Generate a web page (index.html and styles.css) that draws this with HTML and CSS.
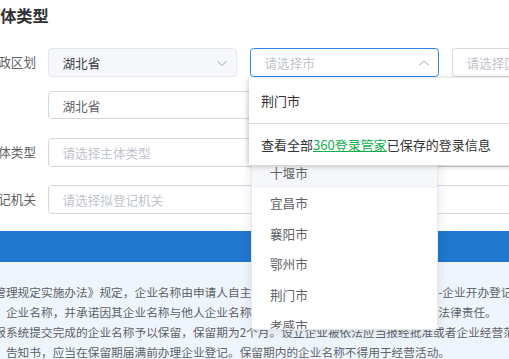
FILE: index.html
```html
<!DOCTYPE html>
<html lang="zh-CN">
<head>
    <meta charset="UTF-8">
    <meta name="viewport" content="width=device-width, initial-scale=1.0">
    <title>主体类型</title>
    <link rel="stylesheet" href="styles.css">
</head>
<body>
    <div class="page">
        <h3 class="section-title">主体类型</h3>
        <div class="form">
            <div class="form-item">
                <label class="form-label">行政区划</label>
                <div class="form-content">
                    <div class="select-row">
                        <div class="select is-disabled">
                            <span class="select-value">湖北省</span>
                            <svg class="arrow" viewBox="0 0 12 12"><path d="M1.5 4.2 L6 8.4 L10.5 4.2"/></svg>
                        </div>
                        <div class="select is-focus">
                            <span class="placeholder">请选择市</span>
                            <svg class="arrow" viewBox="0 0 12 12"><path d="M1.5 8.2 L6 4 L10.5 8.2"/></svg>
                            <!-- 浏览器自动填充提示 -->
                            <div class="autofill">
                                <div class="autofill-item">荆门市</div>
                                <div class="autofill-footer">查看全部<a href="#">360登录管家</a>已保存的登录信息</div>
                            </div>
                            <!-- 下拉选项 -->
                            <div class="dropdown">
                                <ul>
                                    <li>武汉市</li>
                                    <li>黄石市</li>
                                    <li class="hover">十堰市</li>
                                    <li>宜昌市</li>
                                    <li>襄阳市</li>
                                    <li>鄂州市</li>
                                    <li>荆门市</li>
                                    <li>孝感市</li>
                                    <li>荆州市</li>
                                </ul>
                            </div>
                        </div>
                        <div class="select">
                            <span class="placeholder">请选择区/县</span>
                            <svg class="arrow" viewBox="0 0 12 12"><path d="M1.5 4.2 L6 8.4 L10.5 4.2"/></svg>
                        </div>
                    </div>
                    <div class="input"><span class="input-value">湖北省</span></div>
                </div>
            </div>
            <div class="form-item">
                <label class="form-label">主体类型</label>
                <div class="form-content">
                    <div class="input"><span class="placeholder">请选择主体类型</span></div>
                </div>
            </div>
            <div class="form-item">
                <label class="form-label">拟登记机关</label>
                <div class="form-content">
                    <div class="input"><span class="placeholder">请选择拟登记机关</span></div>
                </div>
            </div>
        </div>
        <div class="step-bar">下一步</div>
        <div class="notice">
            <p>根据《企业名称登记管理规定实施办法》规定，企业名称由申请人自主申报，申请人可通过全程电子化系统-企业开办登记栏目自主申报企业名称。</p>
            <p>申请人应当自行申报，企业名称，并承诺因其企业名称与他人企业名称近似侵犯他人合法权益的，依法承担法律责任。</p>
            <p>登记机关对经名称申报系统提交完成的企业名称予以保留，保留期为2个月。设立企业被依法应当报经批准或者企业经营范围中有须经批准项目的，</p>
            <p>项目的，应在领取后，告知书，应当在保留期届满前办理企业登记。保留期内的企业名称不得用于经营活动。</p>
        </div>
    </div>
</body>
</html>
```

FILE: styles.css
```css
html, body {
    margin: 0;
    padding: 0;
}
body {
    width: 509px;
    height: 359px;
    overflow: hidden;
    background-color: #fff;
    font-family: "Noto Sans CJK SC", "Microsoft YaHei", sans-serif;
}
.page {
    width: 780px;
    margin-left: -120px;
}
.section-title {
    margin: 0;
    padding: 4px 0 0 104px;
    font-size: 16.2px;
    line-height: 22px;
    font-weight: 700;
    color: #303133;
}
.form {
    display: flex;
    flex-direction: column;
    gap: 18.4px;
    padding: 22.3px 20px 0 0;
}
.form-item {
    display: flex;
}
.form-label {
    flex-shrink: 0;
    width: 168px;
    box-sizing: border-box;
    padding-right: 12px;
    text-align: right;
    font-size: 12.6px;
    line-height: 28.8px;
    color: #606266;
}
.form-content {
    flex: 1;
    display: flex;
    flex-direction: column;
    gap: 13.6px;
}
.select-row {
    display: flex;
    gap: 13.5px;
}
.select,
.input {
    position: relative;
    display: flex;
    align-items: center;
    height: 28.8px;
    box-sizing: border-box;
    padding: 0 8px 0 13.5px;
    border: 1px solid #d2d7e0;
    border-radius: 3.6px;
    background-color: #fff;
    font-size: 12.6px;
}
.select {
    width: 188.5px;
}
.select-value {
    flex: 1;
    color: #3a3e44;
}
.input-value {
    color: #606266;
}
.placeholder {
    flex: 1;
    color: #c0c4cc;
}
.is-disabled {
    background-color: #f5f7fa;
    border-color: #e4e7ed;
}
.is-focus {
    border-color: #2f88e6;
}
.arrow {
    width: 12px;
    height: 12px;
}
.arrow path {
    fill: none;
    stroke: #c0c4cc;
    stroke-width: 1.2;
}
.autofill {
    position: absolute;
    top: calc(100% + 2px);
    left: -2px;
    z-index: 20;
    width: 300px;
    background-color: #fff;
    box-shadow: 0 1px 6px rgba(0, 0, 0, 0.25);
    font-size: 13px;
    color: #333;
}
.autofill-item {
    height: 45px;
    line-height: 45px;
    padding: 0 12px;
    border-bottom: 1px solid #ddd;
}
.autofill-footer {
    height: 41px;
    line-height: 41px;
    padding: 0 12px;
    white-space: nowrap;
}
.autofill-footer a {
    color: #0bb04a;
    text-decoration: underline;
}
.dropdown {
    position: absolute;
    top: 41.7px;
    left: 0;
    z-index: 10;
    width: 187px;
    height: 239px;
    box-sizing: border-box;
    overflow: hidden;
    border: 1px solid #e4e7ed;
    border-radius: 3.6px;
    background-color: #fff;
    box-shadow: 0 2px 12px rgba(0, 0, 0, 0.1);
}
.dropdown ul {
    list-style-type: none;
    margin: 0;
    padding: 4.4px 0;
}
.dropdown li {
    height: 30.6px;
    line-height: 30.6px;
    padding: 0 18px;
    font-size: 12.6px;
    color: #606266;
}
.dropdown li.hover {
    background-color: #f5f7fa;
}
.step-bar {
    margin-top: 17.2px;
    height: 31px;
    line-height: 31px;
    background-color: #1f77d0;
    color: #fff;
    text-align: center;
    font-size: 12.6px;
}
.notice {
    background-color: #eef5fc;
    padding: 20px 0 10px 9px;
}
.notice p {
    margin: 0;
    font-size: 11.7px;
    line-height: 20px;
    color: #5f6266;
    white-space: nowrap;
}
```
